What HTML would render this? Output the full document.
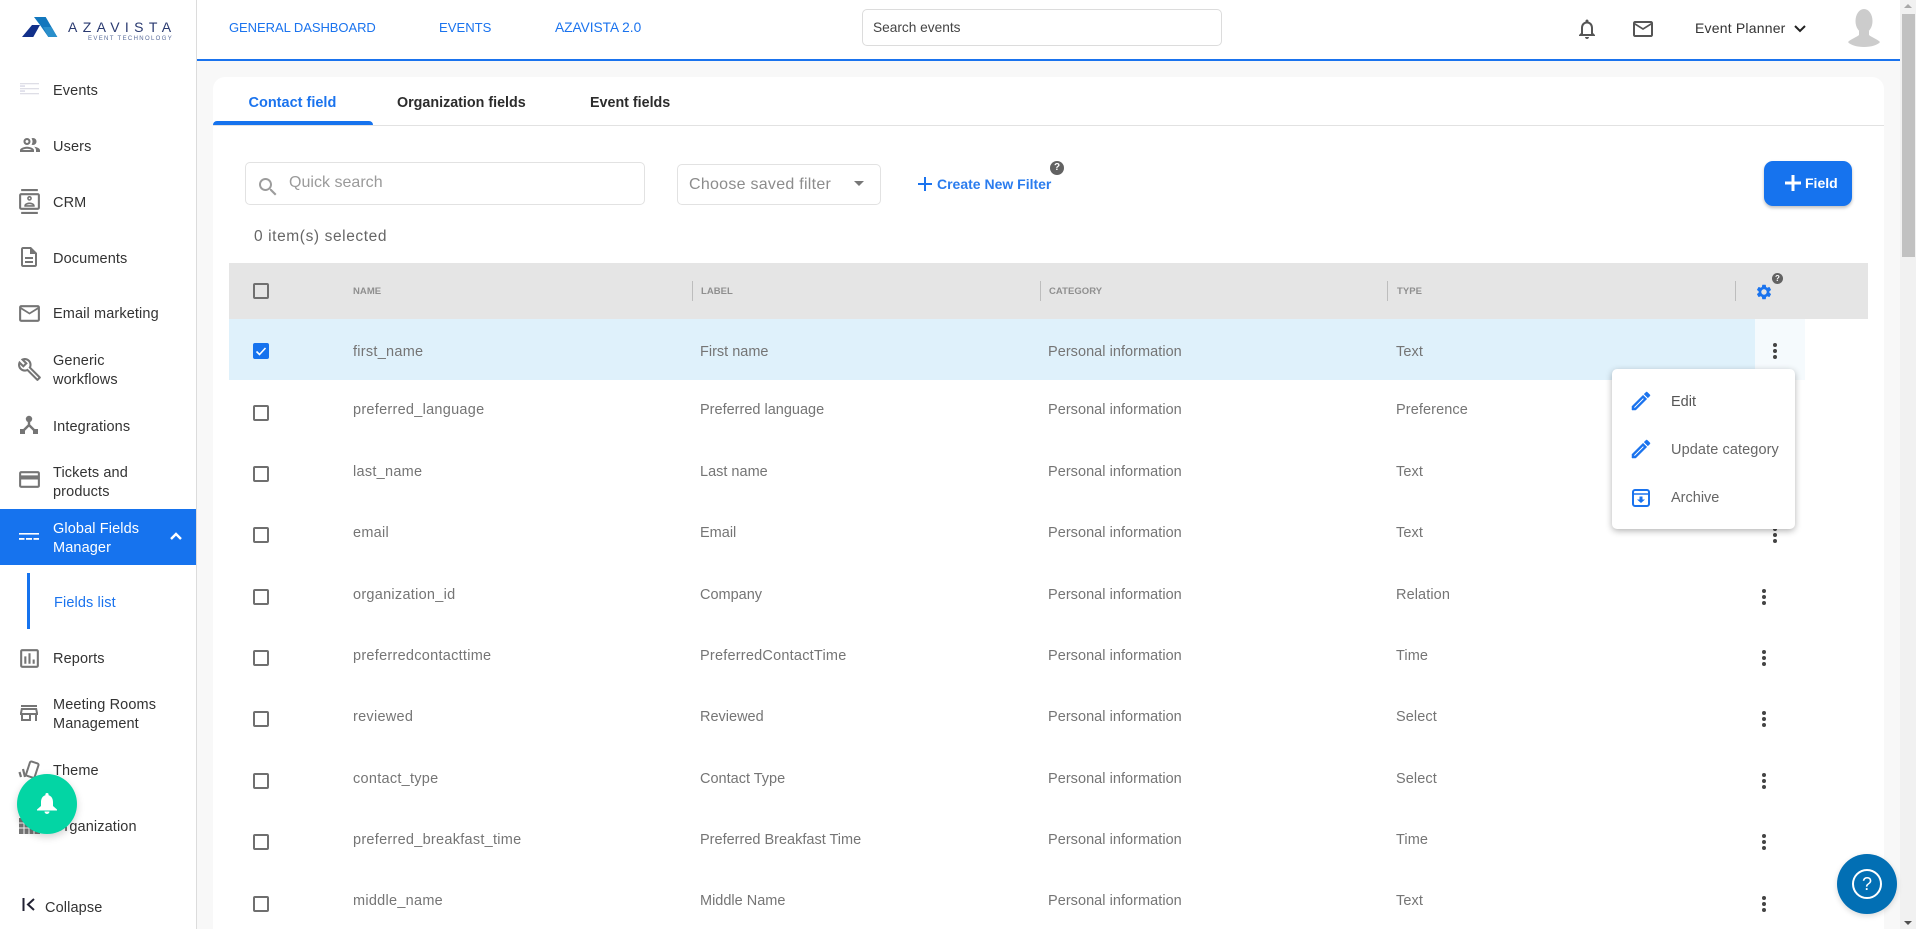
<!DOCTYPE html>
<html><head><meta charset="utf-8"><title>Fields list</title>
<style>
html,body{margin:0;padding:0;width:1916px;height:929px;overflow:hidden;background:#f8f8f8;font-family:"Liberation Sans",sans-serif;color:#333}
div,span,svg{position:absolute}
span{white-space:nowrap;line-height:20px;height:20px}
.s{font-size:14.5px;color:#333;left:53px;letter-spacing:.12px}
.n{font-size:14.5px;color:#757575;letter-spacing:.27px}
.l{font-size:14.5px;color:#757575;letter-spacing:0}
.g{font-size:14.5px;color:#757575;letter-spacing:.04px}
.y{font-size:14.5px;color:#757575;letter-spacing:.1px}
.h{font-size:9.5px;font-weight:bold;color:#8f8f8f;letter-spacing:.05px}
.c{width:12px;height:12px;border:2px solid #6f6f6f;border-radius:2px;left:253px}
.i{fill:#757575}
.b{fill:#1a73ee;stroke:#1a73ee;stroke-width:.5}
.d{width:4px;height:16px}
.d:before{content:"";position:absolute;left:0;top:0;width:4px;height:4px;border-radius:50%;background:#444;box-shadow:0 6px 0 #444,0 12px 0 #444}
.sep{width:1px;height:20px;background:#bdbdbd;top:281px}
</style></head><body>

<!-- top bar -->
<div style="left:197px;top:0;width:1703px;height:59px;background:#fff"></div>
<div style="left:197px;top:59px;width:1703px;height:2px;background:#1a73ee"></div>

<!-- sidebar -->
<div style="left:0;top:0;width:196px;height:929px;background:#fff;border-right:1px solid #dcdcdc"></div>

<!-- logo -->
<svg style="left:22px;top:17px" width="36" height="21" viewBox="0 0 36 21">
<polygon points="0,20 10,8 18,8 11.3,20" fill="#12308a"/>
<polygon points="12,0 23.7,0 35.3,20 26.3,20 18,8" fill="#1277bd"/>
<polygon points="21,10 26.3,20 35.3,20 29.5,10" fill="#2a8fcb"/>
</svg>
<span style="left:68px;top:17px;font-size:14px;letter-spacing:5.35px;color:#2a3a70">AZAVISTA</span>
<span style="left:88px;top:29px;font-size:6px;letter-spacing:1.35px;color:#5a6c9a">EVENT TECHNOLOGY</span>

<!-- sidebar icons -->
<svg style="left:20px;top:83px" width="20" height="12" viewBox="0 0 20 12"><g fill="#dedee6"><rect x="0" y="0" width="19" height="1.3"/><rect x="0" y="5" width="19" height="1.3"/><rect x="0" y="10" width="19" height="1.3"/></g><g fill="#d4d4e4"><rect x="0" y="2.4" width="5" height="1.3"/><rect x="0" y="7.4" width="5" height="1.3"/></g></svg>
<svg class="i" style="left:18px;top:133px" width="24" height="24" viewBox="0 0 24 24"><path d="M9 13.75c-2.34 0-7 1.17-7 3.5V19h14v-1.75c0-2.33-4.66-3.5-7-3.5zM4.34 17c.84-.58 2.87-1.25 4.66-1.25s3.82.67 4.66 1.25H4.34zM9 12c1.93 0 3.5-1.57 3.5-3.5S10.93 5 9 5 5.5 6.57 5.5 8.5 7.07 12 9 12zm0-5c.83 0 1.5.67 1.5 1.5S9.83 10 9 10s-1.5-.67-1.5-1.5S8.17 7 9 7zm7.04 6.81c1.16.84 1.96 1.96 1.96 3.44V19h4v-1.75c0-2.02-3.5-3.17-5.96-3.44zM15 12c1.93 0 3.5-1.57 3.5-3.5S16.93 5 15 5c-.54 0-1.04.13-1.5.35.63.89 1 1.98 1 3.15s-.37 2.26-1 3.15c.46.22.96.35 1.5.35z"/></svg>
<svg class="i" style="left:17px;top:189px" width="25" height="25" viewBox="0 0 24 24"><path d="M20 0H4v2h16V0zM4 24h16v-2H4v2zM20 4H4c-1.1 0-2 .9-2 2v12c0 1.1.9 2 2 2h16c1.1 0 2-.9 2-2V6c0-1.1-.9-2-2-2zm0 14H4V6h16v12zm-8-6.75c1.24 0 2.25-1.01 2.25-2.25S13.24 6.75 12 6.75 9.75 7.76 9.75 9s1.01 2.25 2.25 2.25zm0-3c.41 0 .75.34.75.75s-.34.75-.75.75-.75-.34-.75-.75.34-.75.75-.75zM17 15.99c0-2.09-3.31-2.99-5-2.99s-5 .9-5 2.99V17h10v-1.01zM8.81 15.5c.61-.52 2.03-1 3.19-1 1.17 0 2.59.48 3.2 1H8.81z"/></svg>
<svg class="i" style="left:17px;top:245px" width="24" height="24" viewBox="0 0 24 24"><path d="M8 16h8v2H8zm0-4h8v2H8zm6-10H6c-1.1 0-2 .9-2 2v16c0 1.1.89 2 1.99 2H18c1.1 0 2-.9 2-2V8l-6-6zm4 18H6V4h7v5h5v11z"/></svg>
<svg class="i" style="left:17px;top:301px" width="25" height="25" viewBox="0 0 24 24"><path d="M20 4H4c-1.1 0-1.99.9-1.99 2L2 18c0 1.1.9 2 2 2h16c1.1 0 2-.9 2-2V6c0-1.1-.9-2-2-2zm0 14H4V8l8 5 8-5v10zm-8-7L4 6h16l-8 5z"/></svg>
<svg class="i" style="left:17px;top:357px" width="25" height="25" viewBox="0 0 24 24"><path d="M22.61 18.99l-9.08-9.08c.93-2.34.45-5.1-1.44-7C9.79.61 6.21.4 3.66 2.26L7.5 6.11 6.08 7.52 2.25 3.69C.39 6.23.6 9.82 2.9 12.11c1.86 1.86 4.57 2.35 6.89 1.48l9.11 9.11c.39.39 1.02.39 1.41 0l2.3-2.3c.4-.38.4-1.01 0-1.41zm-3 1.6l-9.46-9.46c-.61.45-1.29.72-2 .82-1.36.2-2.79-.21-3.83-1.25C3.37 9.76 2.93 8.5 3 7.26l3.09 3.09 4.24-4.24-3.09-3.09c1.24-.07 2.49.37 3.44 1.31 1.08 1.08 1.49 2.57 1.24 3.96-.12.71-.42 1.37-.88 1.96l9.45 9.45-.88.89z"/></svg>
<svg style="left:19px;top:415px" width="21" height="21" viewBox="0 0 21 21"><circle cx="10" cy="4" r="3.2" fill="#757575"/><path d="M10 5v6M10 10L4 16M10 10l6 6" stroke="#757575" stroke-width="2.4" fill="none"/><rect x="1" y="14" width="5" height="5" fill="#757575"/><rect x="14" y="14" width="5" height="5" fill="#757575"/></svg>
<svg class="i" style="left:17px;top:467px" width="25" height="25" viewBox="0 0 24 24"><path d="M20 4H4c-1.11 0-1.99.89-1.99 2L2 18c0 1.11.89 2 2 2h16c1.11 0 2-.89 2-2V6c0-1.11-.89-2-2-2zm0 14H4v-6h16v6zm0-10H4V6h16v2z"/></svg>

<div style="left:0;top:509px;width:196px;height:56px;background:#1673ee"></div>
<svg style="left:19px;top:533px" width="20" height="8" viewBox="0 0 20 8"><g fill="#fff"><rect x="0" y="0" width="20" height="1.6"/><rect x="0" y="5" width="5.5" height="1.8"/><rect x="7" y="5" width="6" height="1.8"/><rect x="14.5" y="5" width="5.5" height="1.8"/></g></svg>
<svg style="left:168px;top:530px" width="16" height="12" viewBox="0 0 16 12"><path d="M3 9l5-5 5 5" stroke="#fff" stroke-width="2.4" fill="none"/></svg>
<div style="left:27px;top:573px;width:3px;height:56px;background:#1673ee"></div>

<svg class="i" style="left:17px;top:646px" width="25" height="25" viewBox="0 0 24 24"><path d="M19 3H5c-1.1 0-2 .9-2 2v14c0 1.1.9 2 2 2h14c1.1 0 2-.9 2-2V5c0-1.1-.9-2-2-2zm0 16H5V5h14v14zM7 10h2v7H7zm4-3h2v10h-2zm4 6h2v4h-2z"/></svg>
<svg class="i" style="left:17px;top:701px" width="24" height="24" viewBox="0 0 24 24"><path d="M20 4H4v2h16V4zm1 10v-2l-1-5H4l-1 5v2h1v6h10v-6h4v6h2v-6h1zm-9 4H6v-4h6v4zm-6.96-6l.6-3h12.72l.6 3H5.04z"/></svg>
<svg style="left:18px;top:759px" width="24" height="22" viewBox="0 0 24 22"><rect x="10" y="3" width="9" height="15" rx="1.5" fill="none" stroke="#757575" stroke-width="2" transform="rotate(18 14 10)"/><path d="M5 10l2 8M1.5 13l1.5 5" stroke="#757575" stroke-width="2.2" fill="none"/></svg>
<svg style="left:19px;top:816px" width="22" height="18" viewBox="0 0 22 18"><rect x="0" y="2" width="21" height="16" fill="#757575"/><path d="M0 7h21M0 12h21M5 2v16M10 2v16M15 2v16" stroke="#fff" stroke-width="1"/></svg>

<span class="s" style="top:81px">Events</span>
<span class="s" style="top:137px">Users</span>
<span class="s" style="top:193px">CRM</span>
<span class="s" style="top:249px">Documents</span>
<span class="s" style="top:304px">Email marketing</span>
<span class="s" style="top:351px">Generic</span>
<span class="s" style="top:370px">workflows</span>
<span class="s" style="top:417px">Integrations</span>
<span class="s" style="top:463px">Tickets and</span>
<span class="s" style="top:482px">products</span>
<span class="s" style="top:519px;color:#fff">Global Fields</span>
<span class="s" style="top:538px;color:#fff">Manager</span>
<span class="s" style="top:593px;left:54px;color:#1a73ee">Fields list</span>
<span class="s" style="top:649px">Reports</span>
<span class="s" style="top:695px">Meeting Rooms</span>
<span class="s" style="top:714px">Management</span>
<span class="s" style="top:761px">Theme</span>
<span class="s" style="top:817px">Organization</span>
<svg style="left:22px;top:897px" width="16" height="15" viewBox="0 0 16 15"><path d="M1.5 1v13" stroke="#223" stroke-width="2"/><path d="M12 2L6 7.5 12 13" stroke="#223" stroke-width="2" fill="none"/></svg>
<span class="s" style="top:898px;left:45px">Collapse</span>

<!-- top nav -->
<span style="left:229px;top:18px;font-size:13px;letter-spacing:-.05px;color:#1a73ee">GENERAL DASHBOARD</span>
<span style="left:439px;top:18px;font-size:13.1px;color:#1a73ee">EVENTS</span>
<span style="left:555px;top:18px;font-size:13.7px;color:#1a73ee">AZAVISTA 2.0</span>
<div style="left:862px;top:9px;width:358px;height:35px;border:1px solid #dcdcdc;border-radius:5px;background:#fff"></div>
<span style="left:873px;top:18px;font-size:13.7px;color:#444">Search events</span>
<svg style="left:1575px;top:17px" width="24" height="24" viewBox="0 0 24 24" fill="#555"><path d="M12 22c1.1 0 2-.9 2-2h-4c0 1.1.9 2 2 2zm6-6v-5c0-3.07-1.63-5.64-4.5-6.32V4c0-.83-.67-1.5-1.5-1.5s-1.5.67-1.5 1.5v.68C7.64 5.36 6 7.92 6 11v5l-2 2v1h16v-1l-2-2zm-2 1H8v-6c0-2.48 1.51-4.5 4-4.5s4 2.02 4 4.5v6z"/></svg>
<svg style="left:1631px;top:17px" width="24" height="24" viewBox="0 0 24 24" fill="#555"><path d="M20 4H4c-1.1 0-1.99.9-1.99 2L2 18c0 1.1.9 2 2 2h16c1.1 0 2-.9 2-2V6c0-1.1-.9-2-2-2zm0 14H4V8l8 5 8-5v10zm-8-7L4 6h16l-8 5z"/></svg>
<span style="left:1695px;top:18px;font-size:14px;color:#333;letter-spacing:.2px">Event Planner</span>
<svg style="left:1793px;top:23px" width="14" height="12" viewBox="0 0 14 12"><path d="M2 3l5 5 5-5" stroke="#222" stroke-width="2" fill="none"/></svg>
<svg style="left:1848px;top:9px" width="32" height="38" viewBox="0 0 32 38" fill="#ccc"><ellipse cx="16" cy="12" rx="8.5" ry="12"/><path d="M11 22h10v4c2 2 8 4 11 7-2 3-9 5-16 5S2 36 0 33c3-3 9-5 11-7z"/></svg>

<!-- card -->
<div style="left:213px;top:77px;width:1671px;height:852px;background:#fff;border-radius:12px 12px 0 0"></div>
<div style="left:213px;top:125px;width:1671px;height:1px;background:#e2e2e2"></div>
<div style="left:213px;top:121px;width:160px;height:4px;background:#1673ee;border-radius:4px 4px 0 0"></div>
<span style="left:248.5px;top:92.5px;font-size:14.5px;font-weight:bold;color:#1a73ee">Contact field</span>
<span style="left:397px;top:92.5px;font-size:14.3px;font-weight:bold;color:#2c2c2c">Organization fields</span>
<span style="left:590px;top:92.5px;font-size:14.3px;font-weight:bold;color:#2c2c2c">Event fields</span>

<!-- filters -->
<div style="left:245px;top:162px;width:398px;height:41px;border:1px solid #e2e2e2;border-radius:5px"></div>
<svg style="left:256px;top:175px" width="24" height="24" viewBox="0 0 24 24" fill="#9c9c9c"><path d="M15.5 14h-.79l-.28-.27C15.41 12.59 16 11.11 16 9.5 16 5.91 13.09 3 9.5 3S3 5.91 3 9.5 5.91 16 9.5 16c1.61 0 3.09-.59 4.23-1.57l.27.28v.79l5 4.99L20.49 19l-4.99-5zm-6 0C7.01 14 5 11.99 5 9.5S7.01 5 9.5 5 14 7.01 14 9.5 11.99 14 9.5 14z"/></svg>
<span style="left:289px;top:173px;font-size:16px;letter-spacing:.02px;color:#9a9a9a">Quick search</span>
<div style="left:677px;top:164px;width:202px;height:39px;border:1px solid #e2e2e2;border-radius:5px"></div>
<span style="left:689px;top:175px;font-size:16px;letter-spacing:.27px;color:#8c8c8c">Choose saved filter</span>
<div style="left:854px;top:181px;width:0;height:0;border-left:5px solid transparent;border-right:5px solid transparent;border-top:5px solid #777"></div>
<svg style="left:918px;top:177px" width="14" height="14" viewBox="0 0 14 14"><path d="M7 0v14M0 7h14" stroke="#1a73ee" stroke-width="2"/></svg>
<span style="left:937px;top:174px;font-size:14px;font-weight:bold;color:#2a7cee">Create New Filter</span>
<div style="left:1050px;top:161px;width:14px;height:14px;border-radius:50%;background:#626262;color:#fff;font-size:10px;font-weight:bold;line-height:14px;text-align:center">?</div>
<div style="left:1764px;top:161px;width:88px;height:45px;border-radius:9px;background:#1673ee;box-shadow:0 2px 3px rgba(0,0,0,.25)"></div>
<svg style="left:1785px;top:175px" width="16" height="16" viewBox="0 0 16 16"><path d="M8 0v16M0 8h16" stroke="#fff" stroke-width="3"/></svg>
<span style="left:1805px;top:173px;font-size:14px;font-weight:bold;color:#fff">Field</span>
<span style="left:254px;top:227px;font-size:15.5px;color:#666;letter-spacing:.6px">0 item(s) selected</span>

<!-- table -->
<div style="left:229px;top:263px;width:1639px;height:56px;background:#e5e5e5"></div>
<div style="left:229px;top:319px;width:1526px;height:61px;background:#dff1fb"></div>
<div style="left:1755px;top:319px;width:50px;height:61px;background:#f5fafd"></div>
<div class="c" style="top:283px"></div>
<span class="h" style="left:353px;top:281.5px">NAME</span>
<div class="sep" style="left:692px"></div><span class="h" style="left:701px;top:281.5px">LABEL</span>
<div class="sep" style="left:1040px"></div><span class="h" style="left:1049px;top:281.5px">CATEGORY</span>
<div class="sep" style="left:1387px"></div><span class="h" style="left:1397px;top:281.5px">TYPE</span>
<div class="sep" style="left:1735px"></div>
<svg style="left:1755px;top:283px" width="18" height="18" viewBox="0 0 24 24" fill="#1a73ee"><path d="M19.14 12.94c.04-.3.06-.61.06-.94 0-.32-.02-.64-.07-.94l2.03-1.58c.18-.14.23-.41.12-.61l-1.92-3.32c-.12-.22-.37-.29-.59-.22l-2.39.96c-.5-.38-1.03-.7-1.62-.94l-.36-2.54c-.04-.24-.24-.41-.48-.41h-3.84c-.24 0-.43.17-.47.41l-.36 2.54c-.59.24-1.13.57-1.62.94l-2.39-.96c-.22-.08-.47 0-.59.22L2.74 8.87c-.12.21-.08.47.12.61l2.03 1.58c-.05.3-.09.63-.09.94s.02.64.07.94l-2.03 1.58c-.18.14-.23.41-.12.61l1.92 3.32c.12.22.37.29.59.22l2.39-.96c.5.38 1.03.7 1.62.94l.36 2.54c.05.24.24.41.48.41h3.84c.24 0 .44-.17.47-.41l.36-2.54c.59-.24 1.13-.56 1.62-.94l2.39.96c.22.08.47 0 .59-.22l1.92-3.32c.12-.22.07-.47-.12-.61l-2.01-1.58zM12 15.6c-1.98 0-3.6-1.62-3.6-3.6s1.62-3.6 3.6-3.6 3.6 1.62 3.6 3.6-1.62 3.6-3.6 3.6z"/></svg>
<div style="left:1772px;top:273px;width:11px;height:11px;border-radius:50%;background:#626262;color:#fff;font-size:8px;font-weight:bold;line-height:11px;text-align:center">?</div>

<!-- row checkboxes -->
<div style="left:253px;top:343px;width:16px;height:16px;border-radius:2px;background:#1673ee"></div>
<svg style="left:253px;top:343px" width="16" height="16" viewBox="0 0 16 16"><path d="M3.5 8.5l3 3 6-6.5" stroke="#fff" stroke-width="1.6" fill="none"/></svg>
<div class="c" style="top:405px"></div>
<div class="c" style="top:466px"></div>
<div class="c" style="top:527px"></div>
<div class="c" style="top:589px"></div>
<div class="c" style="top:650px"></div>
<div class="c" style="top:711px"></div>
<div class="c" style="top:773px"></div>
<div class="c" style="top:834px"></div>
<div class="c" style="top:896px"></div>

<!-- rows -->
<span class="n" style="left:353px;top:342px">first_name</span><span class="l" style="left:700px;top:342px">First name</span><span class="g" style="left:1048px;top:342px">Personal information</span><span class="y" style="left:1396px;top:342px">Text</span>
<span class="n" style="left:353px;top:400px">preferred_language</span><span class="l" style="left:700px;top:400px">Preferred language</span><span class="g" style="left:1048px;top:400px">Personal information</span><span class="y" style="left:1396px;top:400px">Preference</span>
<span class="n" style="left:353px;top:462px">last_name</span><span class="l" style="left:700px;top:462px">Last name</span><span class="g" style="left:1048px;top:462px">Personal information</span><span class="y" style="left:1396px;top:462px">Text</span>
<span class="n" style="left:353px;top:523px">email</span><span class="l" style="left:700px;top:523px">Email</span><span class="g" style="left:1048px;top:523px">Personal information</span><span class="y" style="left:1396px;top:523px">Text</span>
<span class="n" style="left:353px;top:585px">organization_id</span><span class="l" style="left:700px;top:585px">Company</span><span class="g" style="left:1048px;top:585px">Personal information</span><span class="y" style="left:1396px;top:585px">Relation</span>
<span class="n" style="left:353px;top:646px">preferredcontacttime</span><span class="l" style="left:700px;top:646px;letter-spacing:.22px">PreferredContactTime</span><span class="g" style="left:1048px;top:646px">Personal information</span><span class="y" style="left:1396px;top:646px">Time</span>
<span class="n" style="left:353px;top:707px">reviewed</span><span class="l" style="left:700px;top:707px">Reviewed</span><span class="g" style="left:1048px;top:707px">Personal information</span><span class="y" style="left:1396px;top:707px">Select</span>
<span class="n" style="left:353px;top:769px">contact_type</span><span class="l" style="left:700px;top:769px">Contact Type</span><span class="g" style="left:1048px;top:769px">Personal information</span><span class="y" style="left:1396px;top:769px">Select</span>
<span class="n" style="left:353px;top:830px">preferred_breakfast_time</span><span class="l" style="left:700px;top:830px">Preferred Breakfast Time</span><span class="g" style="left:1048px;top:830px">Personal information</span><span class="y" style="left:1396px;top:830px">Time</span>
<span class="n" style="left:353px;top:891px">middle_name</span><span class="l" style="left:700px;top:891px">Middle Name</span><span class="g" style="left:1048px;top:891px">Personal information</span><span class="y" style="left:1396px;top:891px">Text</span>

<!-- row menus -->
<div class="d" style="left:1773px;top:343px"></div>
<div class="d" style="left:1773px;top:527px"></div>
<div class="d" style="left:1762px;top:589px"></div>
<div class="d" style="left:1762px;top:650px"></div>
<div class="d" style="left:1762px;top:711px"></div>
<div class="d" style="left:1762px;top:773px"></div>
<div class="d" style="left:1762px;top:834px"></div>
<div class="d" style="left:1762px;top:896px"></div>

<!-- popup menu -->
<div style="left:1612px;top:369px;width:183px;height:160px;background:#fff;border-radius:5px;box-shadow:0 2px 7px rgba(0,0,0,.3)"></div>
<svg class="b" style="left:1629px;top:389px" width="24" height="24" viewBox="0 0 24 24"><path d="M14.06 9.02l.92.92L5.92 19H5v-.92l9.06-9.06M17.66 3c-.25 0-.51.1-.7.29l-1.83 1.83 3.75 3.75 1.83-1.83c.39-.39.39-1.02 0-1.41l-2.34-2.34c-.2-.2-.45-.29-.71-.29zm-3.6 3.19L3 17.25V21h3.75L17.81 9.94l-3.75-3.75z"/></svg>
<svg class="b" style="left:1629px;top:437px" width="24" height="24" viewBox="0 0 24 24"><path d="M14.06 9.02l.92.92L5.92 19H5v-.92l9.06-9.06M17.66 3c-.25 0-.51.1-.7.29l-1.83 1.83 3.75 3.75 1.83-1.83c.39-.39.39-1.02 0-1.41l-2.34-2.34c-.2-.2-.45-.29-.71-.29zm-3.6 3.19L3 17.25V21h3.75L17.81 9.94l-3.75-3.75z"/></svg>
<svg style="left:1631px;top:488px" width="20" height="20" viewBox="0 0 20 20"><rect x="2" y="2" width="16" height="16" rx="2" fill="none" stroke="#1a73ee" stroke-width="2"/><path d="M2 6h16" stroke="#1a73ee" stroke-width="1.5"/><path d="M8.5 8.5h3v3h2.5L10 15l-4-3.5h2.5z" fill="#1a73ee"/></svg>
<span class="l" style="left:1671px;top:392px;color:#555">Edit</span>
<span class="l" style="left:1671px;top:440px;color:#666;letter-spacing:.1px">Update category</span>
<span class="l" style="left:1671px;top:488px;color:#666">Archive</span>

<!-- floating buttons -->
<div style="left:17px;top:774px;width:60px;height:60px;border-radius:50%;background:#03d5a4;box-shadow:0 3px 8px rgba(0,0,0,.18)"></div>
<svg style="left:37px;top:793px" width="20" height="21" viewBox="0 0 20 21" fill="#fff"><path d="M10 0a1.6 1.6 0 0 1 1.6 1.6v.6C14.6 3 16 5.8 16 9v4l4 3.5v1H0v-1l4-3.5V9c0-3.2 1.4-6 4.4-6.8v-.6A1.6 1.6 0 0 1 10 0zM7.5 18.5h5a2.5 2.5 0 0 1-5 0z"/></svg>

<!-- scrollbar -->
<div style="left:1900px;top:0;width:16px;height:929px;background:#f1f1f1"></div>
<div style="left:1902px;top:14px;width:13px;height:243px;background:#c1c1c1"></div>
<div style="left:1904px;top:4px;width:0;height:0;border-left:4px solid transparent;border-right:4px solid transparent;border-bottom:4px solid #a8a8a8"></div>
<div style="left:1904px;top:921px;width:0;height:0;border-left:4px solid transparent;border-right:4px solid transparent;border-top:4px solid #505050"></div>

<div style="left:1837px;top:854px;width:60px;height:60px;border-radius:50%;background:#026fb4;box-shadow:0 2px 6px rgba(0,0,0,.15)"></div>
<div style="left:1852px;top:869px;width:26px;height:26px;border:2px solid #fff;border-radius:50%;color:#fff;font-size:18px;line-height:26px;text-align:center">?</div>

</body></html>
